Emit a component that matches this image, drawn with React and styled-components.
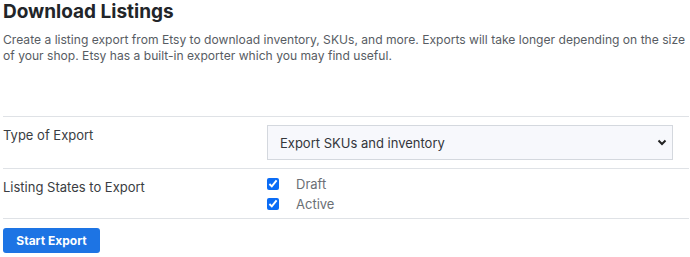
import React from 'react'
import styled, { createGlobalStyle } from 'styled-components'

const GlobalStyle = createGlobalStyle`
  body {
    margin: 0;
    background: #fff;
    font-family: Inter, "Noto Sans", sans-serif;
  }
`

const Container = styled.div`
  padding: 0 1px 0 3px;
`
const Title = styled.h1`
  margin: 0;
  padding-top: 1px;
  font-size: 19px;
  line-height: 21px;
  font-weight: 700;
  color: #222529;
`
const Intro = styled.p`
  margin: 10px 0 0;
  font-size: 12.1px;
  line-height: 16px;
  color: #575c63;
`
const Form = styled.div`
  margin-top: 52px;
`
const Row = styled.div`
  display: grid;
  grid-template-columns: 264px 1fr;
  border-top: 1px solid #dfe2e6;
  padding: ${p => p.pad || '8px 16px 8px 0'};
  &:last-of-type {
    border-bottom: 1px solid #dfe2e6;
  }
`
const Label = styled.div`
  font-size: 13px;
  line-height: 20px;
  color: #3a3d42;
  padding-top: ${p => p.offset || 0}px;
`
const SelectWrap = styled.div`
  position: relative;
`
const Select = styled.select`
  appearance: none;
  width: 100%;
  height: 35px;
  padding: 0 12px;
  border: 1px solid #d4d8de;
  border-radius: 0;
  background: #f7f8fc;
  font-family: inherit;
  font-size: 13px;
  color: #33363b;
  outline: none;
`
const Chevron = styled.svg`
  position: absolute;
  right: 6px;
  top: 14px;
  pointer-events: none;
`
const Checks = styled.div`
  display: flex;
  flex-direction: column;
`
const CheckRow = styled.label`
  display: flex;
  align-items: center;
  gap: 17px;
  height: 20px;
  font-size: 13px;
  color: #6b6f75;
`
const Checkbox = styled.input`
  margin: 0;
  width: 12px;
  height: 12px;
  accent-color: #0b6cf5;
`
const Button = styled.button`
  display: block;
  margin-top: 9px;
  width: 97px;
  height: 25px;
  border: none;
  border-radius: 3px;
  background: #1d74e4;
  color: #fff;
  font-family: inherit;
  font-size: 12px;
  font-weight: 700;
  cursor: pointer;
`

export default function App() {
  return (
    <Container>
      <GlobalStyle />
      <Title>Download Listings</Title>
      <Intro>
        Create a listing export from Etsy to download inventory, SKUs, and more. Exports will take longer depending on the size of your shop. Etsy has a built-in exporter which you may find useful.
      </Intro>
      <Form>
        <Row>
          <Label>Type of Export</Label>
          <SelectWrap>
            <Select defaultValue="skus">
              <option value="skus">Export SKUs and inventory</option>
            </Select>
            <Chevron width="10" height="7" viewBox="0 0 10 7">
              <path d="M1.5 1.5 L5 5 L8.5 1.5" fill="none" stroke="#222" strokeWidth="2" />
            </Chevron>
          </SelectWrap>
        </Row>
        <Row pad="5px 16px 4px 0">
          <Label offset={3}>Listing States to Export</Label>
          <Checks>
            <CheckRow><Checkbox type="checkbox" defaultChecked />Draft</CheckRow>
            <CheckRow><Checkbox type="checkbox" defaultChecked />Active</CheckRow>
          </Checks>
        </Row>
      </Form>
      <Button>Start Export</Button>
    </Container>
  )
}
